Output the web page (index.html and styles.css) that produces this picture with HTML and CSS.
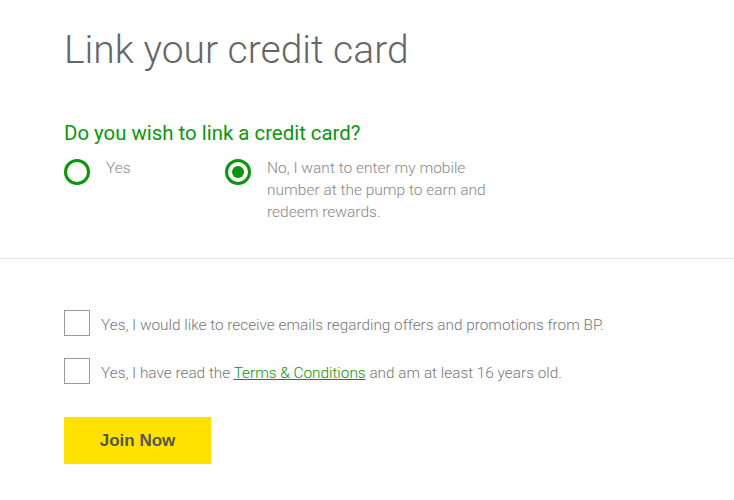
FILE: index.html
```html
<!DOCTYPE html>
<html>
<head>
<meta charset="utf-8">
<link rel="stylesheet" href="styles.css">
</head>
<body>
<section class="top">
  <h1 class="title">Link your credit card</h1>
  <h2 class="question">Do you wish to link a credit card?</h2>
  <div class="radios">
    <label class="radio radio-yes">
      <span class="circle"></span>
      <span class="radio-text">Yes</span>
    </label>
    <label class="radio radio-no">
      <span class="circle checked"></span>
      <span class="radio-text">No, I want to enter my mobile number at the pump to earn and redeem rewards.</span>
    </label>
  </div>
</section>
<hr class="divider">
<section class="bottom">
  <label class="check">
    <span class="box"></span>
    <span class="check-text">Yes, I would like to receive emails regarding offers and promotions from BP.</span>
  </label>
  <label class="check">
    <span class="box"></span>
    <span class="check-text">Yes, I have read the <a class="link" href="#">Terms &amp; Conditions</a> and am at least 16 years old.</span>
  </label>
  <button class="join">Join Now</button>
</section>
</body>
</html>
```
FILE: styles.css
```css
html, body {
  margin: 0;
  padding: 0;
  background: #fff;
}
body {
  font-family: Roboto, "Liberation Sans", sans-serif;
  color: #888;
}
.top {
  padding: 26px 64px 0 64px;
  height: 232px;
  box-sizing: border-box;
}
.title {
  margin: 0;
  font-weight: 300;
  font-size: 39px;
  line-height: 48px;
  color: #666;
}
.question {
  margin: 46px 0 0 0;
  font-weight: 400;
  font-size: 20.4px;
  line-height: 26px;
  color: #0a960a;
}
.radios {
  display: flex;
  margin-top: 13px;
}
.radio {
  display: flex;
  align-items: flex-start;
}
.radio-yes {
  width: 161px;
}
.circle {
  width: 26px;
  height: 26px;
  box-sizing: border-box;
  border: 3px solid #0a960a;
  border-radius: 50%;
  flex: none;
  display: flex;
  align-items: center;
  justify-content: center;
}
.circle.checked::after {
  content: "";
  width: 12px;
  height: 12px;
  border-radius: 50%;
  background: #0a960a;
}
.radio-text {
  margin-left: 16px;
  margin-top: -2px;
  font-size: 15.5px;
  line-height: 22px;
  font-weight: 300;
  color: #888;
}
.radio-no .radio-text {
  width: 240px;
}
.divider {
  margin: 26px 0 0 0;
  border: 0;
  border-top: 1px solid #e6e6e6;
  box-shadow: 0 1px 2px rgba(0, 0, 0, 0.03);
  height: 0;
}
.bottom {
  padding: 51px 64px 0 64px;
  display: flex;
  flex-direction: column;
  align-items: flex-start;
}
.check {
  display: flex;
  align-items: center;
  margin-bottom: 22px;
}
.box {
  width: 26px;
  height: 26px;
  box-sizing: border-box;
  border: 1px solid #9a9a9a;
  flex: none;
}
.check-text {
  margin-left: 11px;
  padding-top: 3px;
  font-size: 15.35px;
  font-weight: 300;
  color: #777;
}
.link {
  color: #0a960a;
  text-decoration: underline;
}
.join {
  margin-top: 11px;
  width: 147px;
  height: 47px;
  border: 0;
  background: #ffe200;
  font-family: "Liberation Sans", Arial, sans-serif;
  font-weight: 700;
  font-size: 17px;
  color: #555;
  cursor: pointer;
}
```
